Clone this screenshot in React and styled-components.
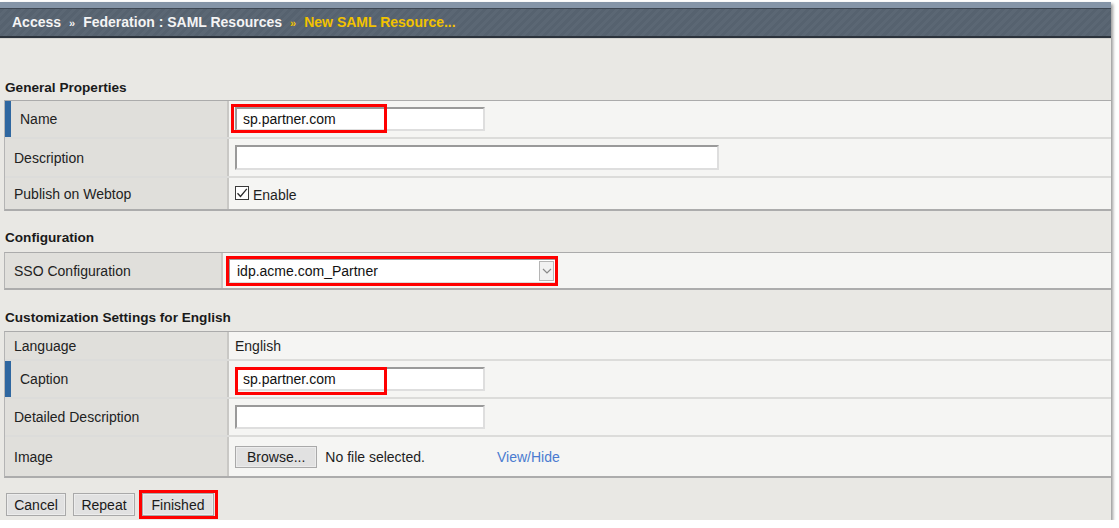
import React from "react";
import styled, { createGlobalStyle } from "styled-components";

const Global = createGlobalStyle`
  html, body { margin: 0; padding: 0; background: #ffffff; }
  body { font-family: "Liberation Sans", Arial, sans-serif; font-size: 14px; color: #1e1e1e; }
  * { box-sizing: border-box; }
`;

const Frame = styled.div`
  width: 1111px;
  height: 518px;
  margin-top: 2px;
  background: #e9e8e4;
  box-shadow: 2px 2px 3px rgba(0, 0, 0, 0.4);
  display: flex;
  flex-direction: column;
  overflow: hidden;
`;

const TopStrip = styled.div`
  height: 6px;
  background: #8595a8;
`;

const Header = styled.div`
  height: 30px;
  display: flex;
  align-items: center;
  padding-left: 12px;
  padding-bottom: 2px;
  gap: 7px;
  border-top: 1px solid #3d4652;
  border-bottom: 2px solid #2c333c;
  box-shadow: 0 1px 0 #d6d5d1;
  background: repeating-linear-gradient(
    135deg,
    #56626f 0px,
    #56626f 3px,
    #5b6774 3px,
    #5b6774 6px
  );
  font-weight: bold;
  font-size: 14px;
  color: #f4f4f4;
`;

const Crumb = styled.span`
  color: ${(p) => (p.$current ? "#f2c200" : "#f4f4f4")};
`;

const Sep = styled.span`
  font-size: 11px;
  font-weight: bold;
  margin: 0 1px;
  color: ${(p) => (p.$current ? "#f2c200" : "#f4f4f4")};
  position: relative;
  top: 1px;
`;

const SectionTitle = styled.div`
  padding: ${(p) => p.$top}px 0 ${(p) => p.$bottom}px 5px;
  font-weight: bold;
  font-size: 13.6px;
  line-height: 16px;
  color: #1a1a1a;
`;

const Table = styled.div`
  --lw: ${(p) => p.$lw}px;
  margin-left: 4px;
  border-top: 1px solid #ababab;
  border-left: 1px solid #b4b4b4;
  border-bottom: 2px solid #acacac;
  display: flex;
  flex-direction: column;
`;

const Row = styled.div`
  display: grid;
  grid-template-columns: var(--lw) 1fr;
  height: ${(p) => p.$h}px;
  border-bottom: ${(p) => (p.$last ? "none" : "2px solid #dcdcda")};
`;

const Label = styled.div`
  background: #e0dfdb;
  border-right: 2px solid #c9c8c5;
  border-left: ${(p) => (p.$accent ? "6px solid #2f67a0" : "none")};
  display: flex;
  align-items: center;
  padding-left: 9px;
  font-size: 14px;
  color: #222;
`;

const Value = styled.div`
  background: #f5f5f3;
  display: flex;
  align-items: center;
  padding-left: 6px;
  gap: 8px;
  font-size: 14px;
  color: #1e1e1e;
`;

const Field = styled.div`
  position: relative;
  display: inline-flex;
`;

const TextInput = styled.input`
  width: ${(p) => p.$w}px;
  height: ${(p) => p.$h || 24}px;
  background: #fff;
  border-style: solid;
  border-width: 2px;
  border-color: #9a9a9a #dedede #dedede #9a9a9a;
  padding: 0 6px;
  font-family: "Liberation Sans", Arial, sans-serif;
  font-size: 14px;
  color: #111;
  outline: none;
`;

const Highlight = styled.div`
  position: absolute;
  left: ${(p) => p.$x}px;
  top: ${(p) => p.$y}px;
  width: ${(p) => p.$w}px;
  height: ${(p) => p.$h}px;
  border: 3px solid #ff0000;
  pointer-events: none;
`;

const Select = styled.div`
  width: 327px;
  height: 24px;
  background: #fff;
  border-style: solid;
  border-width: 1px;
  border-color: #9a9a9a #dcdcdc #dcdcdc #9a9a9a;
  display: flex;
  align-items: center;
  justify-content: space-between;
  padding-left: 7px;
  padding-right: 1px;
  font-size: 14px;
  color: #111;
`;

const Arrow = styled.div`
  width: 15px;
  height: 20px;
  background: #f1f1f1;
  border: 1px solid #b5b5b5;
  display: flex;
  align-items: center;
  justify-content: center;
`;

const CheckRow = styled.label`
  display: flex;
  align-items: center;
  gap: 4px;
  font-size: 14px;
  color: #1e1e1e;
  margin-top: 2px;
`;

const Box = styled.span`
  width: 14px;
  height: 14px;
  border: 1px solid #3a3a3a;
  background: #fff;
  display: inline-flex;
  align-items: center;
  justify-content: center;
  position: relative;
  top: -2px;
`;

const Button = styled.button`
  height: ${(p) => p.$h || 23}px;
  min-width: ${(p) => p.$w || 0}px;
  padding: 0 ${(p) => p.$px || 7}px;
  background: #e1e1e1;
  border: 1px solid #a9a9a9;
  box-shadow: inset 0 0 0 1px #ececec;
  font-family: "Liberation Sans", Arial, sans-serif;
  font-size: 14px;
  color: #1a1a1a;
  cursor: pointer;
`;

const Link = styled.a`
  color: #4a7bd0;
  text-decoration: none;
  margin-left: 64px;
  font-size: 14px;
`;

const Buttons = styled.div`
  display: flex;
  gap: 7px;
  padding: 15px 0 0 6px;
`;

export default function App() {
  return (
    <>
      <Global />
      <Frame>
        <TopStrip />
        <Header>
          <Crumb>Access</Crumb>
          <Sep>»</Sep>
          <Crumb>Federation : SAML Resources</Crumb>
          <Sep $current>»</Sep>
          <Crumb $current>New SAML Resource...</Crumb>
        </Header>

        <SectionTitle $top={42} $bottom={4}>General Properties</SectionTitle>
        <Table $lw={224}>
          <Row $h={38}>
            <Label $accent>Name</Label>
            <Value>
              <Field>
                <TextInput $w={250} defaultValue="sp.partner.com" />
                <Highlight $x={-4} $y={-3} $w={156} $h={29} />
              </Field>
            </Value>
          </Row>
          <Row $h={39}>
            <Label>Description</Label>
            <Value>
              <TextInput $w={484} $h={25} defaultValue="" />
            </Value>
          </Row>
          <Row $h={31} $last>
            <Label>Publish on Webtop</Label>
            <Value>
              <CheckRow>
                <Box>
                  <svg width="12" height="12" viewBox="0 0 12 12">
                    <path d="M1.5 6.2 L4.5 9.5 L10.8 1.8" fill="none" stroke="#2a2a2a" strokeWidth="1.3" />
                  </svg>
                </Box>
                Enable
              </CheckRow>
            </Value>
          </Row>
        </Table>

        <SectionTitle $top={19} $bottom={6}>Configuration</SectionTitle>
        <Table $lw={218}>
          <Row $h={35} $last>
            <Label>SSO Configuration</Label>
            <Value>
              <Field>
                <Select>
                  idp.acme.com_Partner
                  <Arrow>
                    <svg width="10" height="8" viewBox="0 0 10 8">
                      <path d="M1 2 L5 6 L9 2" fill="none" stroke="#8a8a8a" strokeWidth="1.2" />
                    </svg>
                  </Arrow>
                </Select>
                <Highlight $x={-3} $y={-3} $w={332} $h={30} />
              </Field>
            </Value>
          </Row>
        </Table>

        <SectionTitle $top={20} $bottom={5}>Customization Settings for English</SectionTitle>
        <Table $lw={224}>
          <Row $h={29}>
            <Label>Language</Label>
            <Value>English</Value>
          </Row>
          <Row $h={38}>
            <Label $accent>Caption</Label>
            <Value>
              <Field>
                <TextInput $w={250} defaultValue="sp.partner.com" />
                <Highlight $x={0} $y={0} $w={152} $h={28} />
              </Field>
            </Value>
          </Row>
          <Row $h={38}>
            <Label>Detailed Description</Label>
            <Value>
              <TextInput $w={250} defaultValue="" />
            </Value>
          </Row>
          <Row $h={39} $last>
            <Label>Image</Label>
            <Value>
              <Button $h={22} $px={11}>Browse...</Button>
              No file selected.
              <Link href="#">View/Hide</Link>
            </Value>
          </Row>
        </Table>

        <Buttons>
          <Button $w={60}>Cancel</Button>
          <Button $w={62}>Repeat</Button>
          <Field>
            <Button $w={72}>Finished</Button>
            <Highlight $x={-3} $y={-3} $w={79} $h={29} />
          </Field>
        </Buttons>
      </Frame>
    </>
  );
}
